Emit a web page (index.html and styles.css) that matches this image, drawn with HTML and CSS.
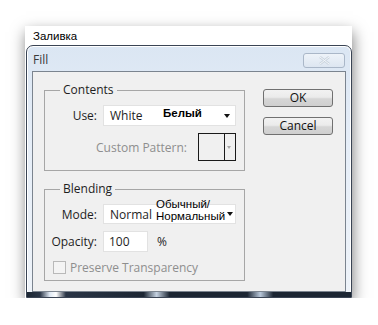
FILE: index.html
```html
<!DOCTYPE html>
<html lang="ru">
<head>
  <meta charset="UTF-8">
  <title>Заливка</title>
  <link rel="stylesheet" href="styles.css">
</head>
<body>
  <div class="sheet">
    <div class="caption">Заливка</div>

    <div class="window">
      <div class="titlebar">
        <span class="title">Fill</span>
        <span class="close">
          <svg width="13" height="9" viewBox="0 0 13 9">
            <path d="M2 1 L11 8 M11 1 L2 8" stroke="#c9d3de" stroke-width="2.4" fill="none"/>
            <path d="M2 1 L11 8 M11 1 L2 8" stroke="#f4f7fa" stroke-width="1" fill="none"/>
          </svg>
        </span>
      </div>

      <div class="client">
        <div class="groups">
          <fieldset class="group contents">
            <legend>Contents</legend>
            <div class="row">
              <span class="label">Use:</span>
              <div class="select">
                <span>White</span>
                <span class="note note-use">Белый</span>
                <span class="arrow"></span>
              </div>
            </div>
            <div class="row pattern-row">
              <span class="label muted">Custom Pattern:</span>
              <div class="pattern">
                <span class="swatch"></span>
                <span class="arrow small"></span>
              </div>
            </div>
          </fieldset>

          <fieldset class="group blending">
            <legend>Blending</legend>
            <div class="row">
              <span class="label">Mode:</span>
              <div class="select mode">
                <span>Normal</span>
                <span class="note note-mode">Обычный/<br>Нормальный</span>
                <span class="arrow"></span>
              </div>
            </div>
            <div class="row">
              <span class="label">Opacity:</span>
              <div class="field">100</div>
              <span class="unit">%</span>
            </div>
            <div class="row check-row">
              <span class="checkbox"></span>
              <span class="muted">Preserve Transparency</span>
            </div>
          </fieldset>
        </div>

        <div class="buttons">
          <button>OK</button>
          <button>Cancel</button>
        </div>
      </div>
    </div>
  </div>
</body>
</html>
```

FILE: styles.css
```css
body {
  margin: 0;
  padding: 26px 0 0 25px;
  background: #ffffff;
  font-family: 'Open Sans', sans-serif;
  font-size: 12px;
  color: #1e1e1e;
}

.sheet {
  width: 327px;
  background: #ffffff;
  box-shadow: 1px 6px 14px rgba(0,0,0,0.5);
}

.caption {
  height: 19px;
  line-height: 20px;
  padding-left: 8px;
  font-family: 'Liberation Sans', sans-serif;
  font-size: 11.5px;
  color: #000;
}

.window {
  margin-left: 1px;
  height: 253px;
  box-sizing: border-box;
  border: 1px solid #3a4454;
  border-radius: 7px 7px 0 0;
  background: linear-gradient(to bottom, #dbe6f3, #e6eef8 40%, #eef3f9);
  box-shadow: inset 0 1px 0 #ffffff, inset 1px 0 0 #ffffff, inset -1px 0 0 #ffffff;
  padding-bottom: 5px;
  position: relative;
}

/* bottom frame with glass streaks */
.window::after {
  content: "";
  position: absolute;
  left: 0;
  right: 0;
  bottom: 0;
  height: 5px;
  background: linear-gradient(to right,
    #1c2633 0, #2a3546 4%, #dfe8f3 7%, #ffffff 9%, #2a3546 12%,
    #1c2633 36%, #c5d2e1 40%, #1c2633 44%,
    #1c2633 68%, #b9c8da 72%, #1c2633 76%, #1c2633 100%);
}

.titlebar {
  height: 25px;
  display: flex;
  align-items: center;
  justify-content: space-between;
  padding: 0 6px 0 6px;
}

.title {
  color: #3a3a3a;
  font-size: 12px;
  margin-top: 2px;
}

.close {
  width: 40px;
  height: 13px;
  margin-top: 3px;
  border: 1px solid #aab7c8;
  border-radius: 3px;
  background: linear-gradient(to bottom, #eef3f9, #dde6f1);
  display: flex;
  align-items: center;
  justify-content: center;
}

.client {
  margin: 0 5px;
  height: 221px;
  box-sizing: border-box;
  border: 1px solid #7b848f;
  background: #f0f0f0;
  display: flex;
  align-items: flex-start;
}

.groups {
  width: 201px;
  margin: 10px 0 0 11px;
  display: flex;
  flex-direction: column;
  gap: 10px;
}

.group {
  margin: 0;
  padding: 0 8px 0 0;
  border: 1px solid #a6a6a6;
  min-width: 0;
}

.group legend {
  margin-left: 15px;
  padding: 0 3px;
  font-size: 12px;
  line-height: 16px;
  color: #1e1e1e;
}

.contents {
  height: 89px;
  box-sizing: border-box;
  padding-top: 7px;
}

.blending {
  height: 100px;
  box-sizing: border-box;
  padding-top: 7px;
}

.row {
  display: flex;
  align-items: center;
  margin-bottom: 7px;
}

.label {
  width: 52px;
  text-align: right;
  margin-right: 6px;
  flex-shrink: 0;
}

.muted {
  color: #8e8e8e;
}

.select {
  width: 133px;
  height: 21px;
  box-sizing: border-box;
  background: #ffffff;
  border: 1px solid #e2e2e2;
  padding-left: 6px;
  display: flex;
  align-items: center;
  position: relative;
}

.select.mode {
  height: 20px;
}

.arrow {
  position: absolute;
  right: 5px;
  top: 8px;
  width: 0;
  height: 0;
  border-left: 3.5px solid transparent;
  border-right: 3.5px solid transparent;
  border-top: 4px solid #111;
}

.note {
  position: absolute;
  font-family: 'Liberation Sans', sans-serif;
  color: #000;
}

.note-use {
  left: 59px;
  top: 1px;
  font-size: 11.5px;
  font-weight: bold;
}

.note-mode {
  left: 52px;
  top: -7px;
  font-size: 11.5px;
  line-height: 12px;
}

.mode .arrow {
  right: 2px;
  top: 7px;
}

.pattern-row {
  justify-content: flex-end;
}

.pattern-row .label {
  width: auto;
  margin-right: 11px;
}

.pattern {
  width: 38px;
  height: 28px;
  box-sizing: border-box;
  border: 1px solid #1a1a1a;
  display: flex;
  position: relative;
}

.swatch {
  width: 25px;
  border-right: 1px solid #1a1a1a;
}

.arrow.small {
  right: 4px;
  top: 12px;
  border-left-width: 2.5px;
  border-right-width: 2.5px;
  border-top: 3px solid #a8a8a8;
}

.field {
  width: 45px;
  height: 21px;
  box-sizing: border-box;
  background: #ffffff;
  border: 1px solid #e2e2e2;
  padding-left: 5px;
  line-height: 19px;
}

.unit {
  margin-left: 9px;
}

.check-row {
  padding-left: 8px;
  margin-top: 3px;
}

.checkbox {
  width: 11px;
  height: 11px;
  border: 1px solid #b9b9b9;
  background: #f4f4f4;
  margin-right: 4px;
}

.buttons {
  width: 70px;
  margin: 17px 0 0 18px;
  display: flex;
  flex-direction: column;
  gap: 10px;
}

.buttons button {
  height: 18px;
  padding: 0;
  font-family: 'Open Sans', sans-serif;
  font-size: 12px;
  line-height: 16px;
  color: #111;
  border: 1px solid #707070;
  border-radius: 3px;
  background: linear-gradient(to bottom, #f2f2f2 0, #ebebeb 45%, #d6d6d6 55%, #cfcfcf 100%);
}
```
